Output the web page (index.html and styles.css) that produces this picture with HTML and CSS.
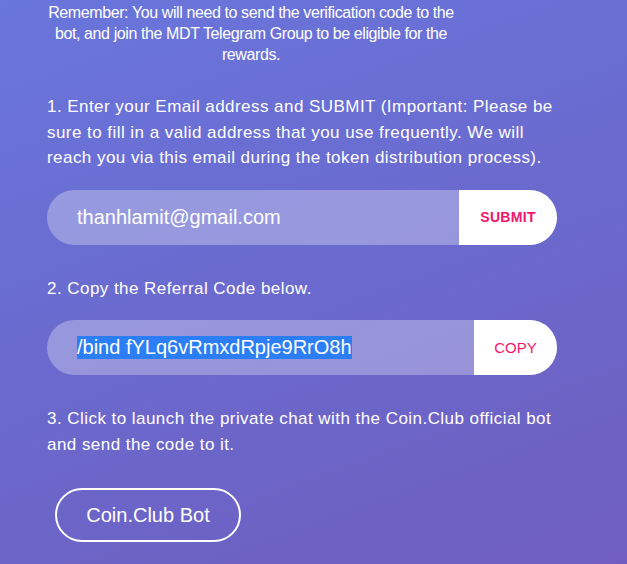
FILE: index.html
```html
<!DOCTYPE html>
<html>
<head>
<meta name="viewport" content="width=device-width, initial-scale=1">
<link rel="stylesheet" href="styles.css">
</head>
<body>

<div class="page">
  <p class="remember">Remember: You will need to send the verification code to the bot, and join the MDT Telegram Group to be eligible for the rewards.</p>

  <p class="step first">1. Enter your Email address and SUBMIT (Important: Please be sure to fill in a valid address that you use frequently. We will reach you via this email during the token distribution process).</p>
  <div class="field">
    <div class="field-text">thanhlamit@gmail.com</div>
    <button class="field-btn submit">SUBMIT</button>
  </div>

  <p class="step">2. Copy the Referral Code below.</p>
  <div class="field">
    <div class="field-text"><span class="selected">/bind fYLq6vRmxdRpje9RrO8h</span></div>
    <button class="field-btn copy">COPY</button>
  </div>

  <p class="step">3. Click to launch the private chat with the Coin.Club official bot and send the code to it.</p>
  <button class="bot-btn">Coin.Club Bot</button>
</div>

</body>
</html>
```

FILE: styles.css
```css
html, body {
    margin: 0;
    height: 100%;
}

body {
    font-family: "Liberation Sans", Arial, sans-serif;
    color: #fff;
    background: linear-gradient(160deg, #6976dc 0%, #6b68cc 55%, #6f5ebf 100%);
    overflow: hidden;
}

.page {
    padding: 0 70px 0 47px;
}

/* Notice on top */
.remember {
    width: 420px;
    margin: 2px 0 0 -6px;
    font-size: 16px;
    letter-spacing: -0.4px;
    line-height: 21px;
    text-align: center;
}

.step {
    width: 512px;
    margin: 31px 0 0 0;
    font-size: 17px;
    letter-spacing: 0.45px;
    line-height: 25.5px;
}

.step.first {
    margin-top: 29px;
}

/* Input with button on the right */
.field {
    display: flex;
    width: 510px;
    height: 55px;
    margin-top: 19px;
    border-radius: 28px;
    overflow: hidden;
    background-color: rgba(255, 255, 255, 0.3);
}

.field-text {
    flex: 1;
    display: flex;
    align-items: center;
    padding-left: 30px;
    font-size: 20px;
}

.selected {
    background-color: #2b7ef5;
}

.field-btn {
    border: none;
    outline: none;
    background-color: #fff;
    color: #f5146b;
    font-family: inherit;
    font-size: 14px;
    cursor: pointer;
}

.field-btn.submit {
    width: 98px;
    font-weight: bold;
    letter-spacing: 0.3px;
}

.field-btn.copy {
    width: 83px;
    font-size: 15px;
}

.bot-btn {
    margin: 31px 0 0 8px;
    width: 186px;
    height: 54px;
    border: 2px solid #fff;
    border-radius: 27px;
    background: transparent;
    color: #fff;
    font-family: inherit;
    font-size: 20px;
    cursor: pointer;
}
```
